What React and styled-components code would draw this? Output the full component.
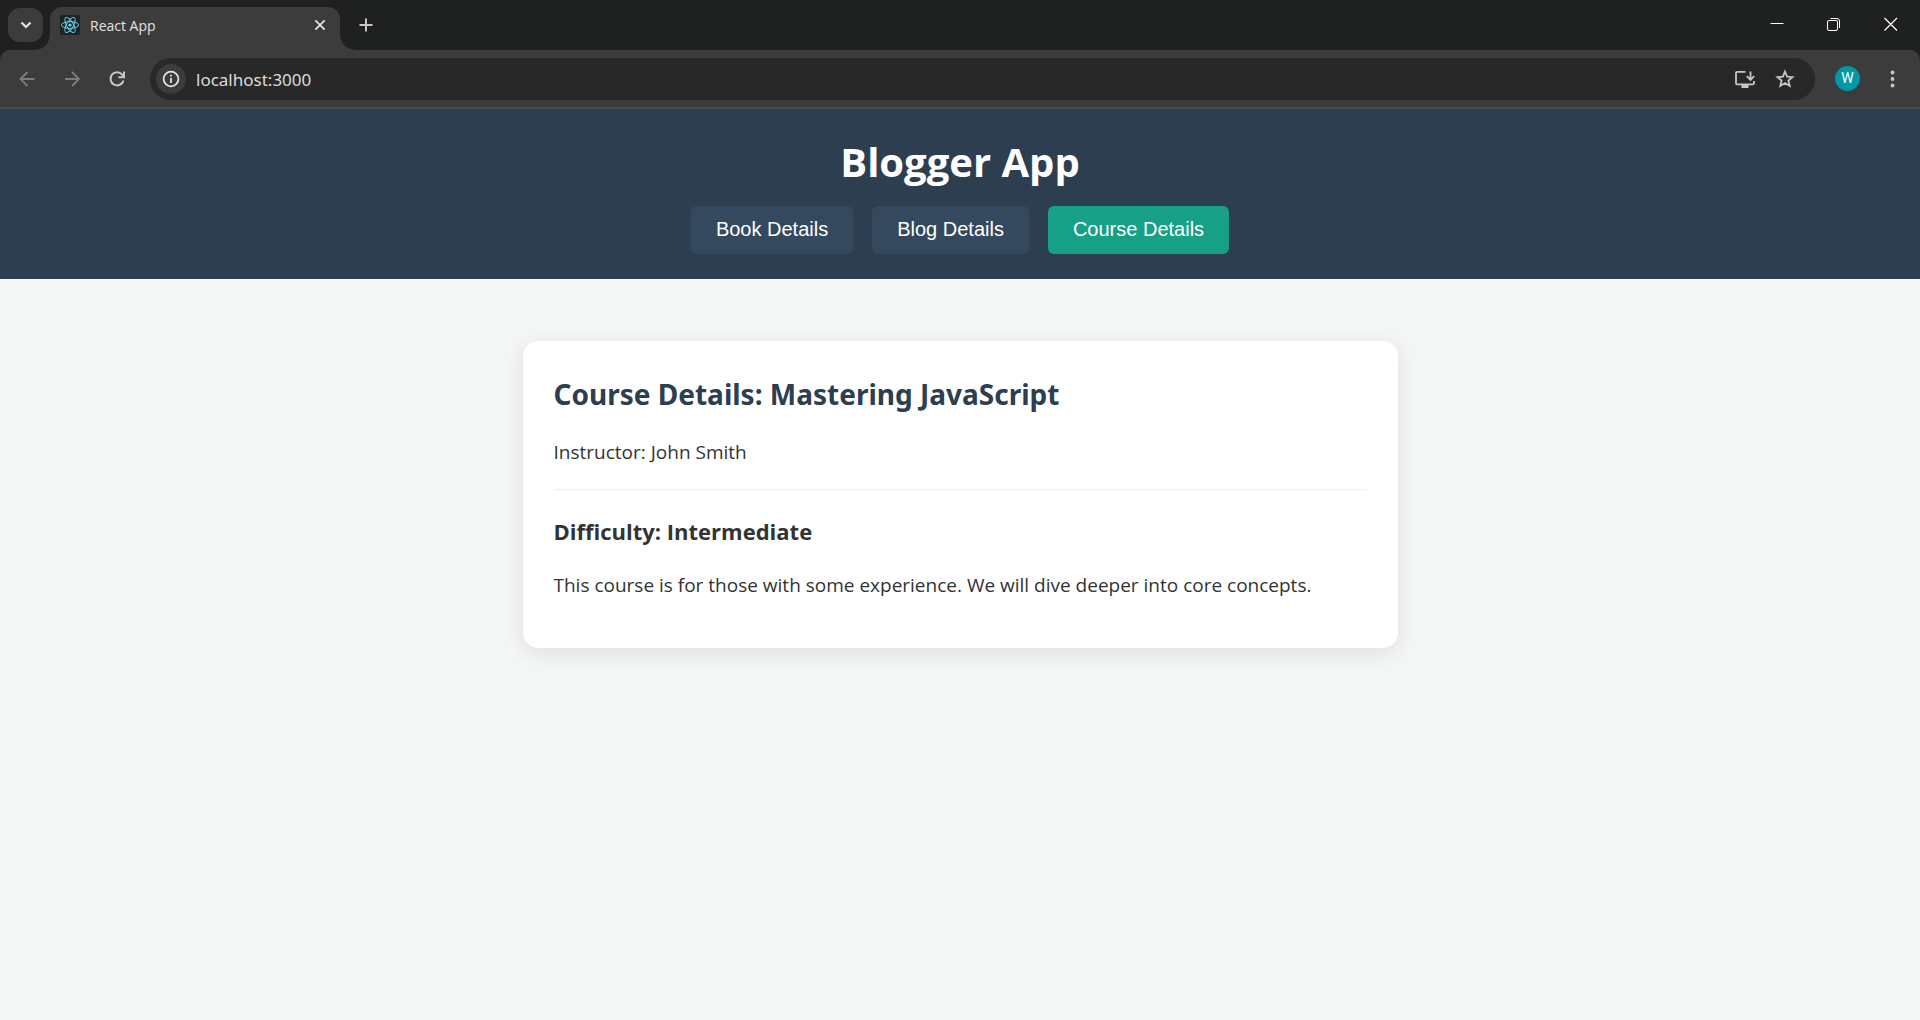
import React from "react";
import styled, { createGlobalStyle } from "styled-components";

const c = {
  frame: "#1f2120",
  toolbar: "#3c3c3c",
  field: "#282828",
  icon: "#c7c7c7",
  navy: "#2c3e50",
};

const GlobalStyle = createGlobalStyle`
  *, *::before, *::after { box-sizing: border-box; }
  body {
    margin: 0;
    background: #f4f7f6;
    color: #333;
    font-family: "Open Sans", "Noto Sans", sans-serif;
  }
  button { border: 0; padding: 0; background: none; font: inherit; cursor: pointer; }
`;

const TabStrip = styled.div`
  display: flex;
  align-items: flex-end;
  height: 50px;
  padding: 0 1px 0 8px;
  background: ${c.frame};
`;

const IconButton = styled.button`
  display: flex;
  align-items: center;
  justify-content: center;
  flex: none;
  width: ${(p) => p.$w}px;
  height: ${(p) => p.$h || p.$w}px;
  border-radius: ${(p) => p.$radius || 0}px;
  background: ${(p) => p.$bg || "transparent"};
  color: ${(p) => p.$color || c.icon};
`;

const TabSearch = styled.div`
  align-self: flex-start;
  padding-top: 8px;
`;

const Tab = styled.div`
  position: relative;
  display: flex;
  align-items: center;
  width: 290px;
  height: 43px;
  margin-left: 7px;
  padding: 0 10px 7px;
  border-radius: 12px 12px 0 0;
  background: ${c.toolbar};
  color: #e3e3e3;
  &::before, &::after {
    content: "";
    position: absolute;
    bottom: 0;
    width: 14px;
    height: 14px;
  }
  &::before {
    right: 100%;
    background: radial-gradient(circle at 0 0, transparent 13px, ${c.toolbar} 14px);
  }
  &::after {
    left: 100%;
    background: radial-gradient(circle at 100% 0, transparent 13px, ${c.toolbar} 14px);
  }
`;

const Favicon = styled.span`
  display: flex;
  width: 20px;
  height: 20px;
  border-radius: 2px;
  background: #222;
`;

const TabTitle = styled.span`
  flex: 1;
  padding: 1px 0 0 10px;
  font-size: 14px;
  line-height: 21px;
`;

const NewTab = styled.div`
  align-self: flex-start;
  padding: 8px 0 0 9px;
`;

const WindowControls = styled.div`
  display: flex;
  align-self: flex-start;
  margin-left: auto;
`;

const ToolbarBack = styled.div`
  background: ${c.frame};
`;

const Toolbar = styled.div`
  display: flex;
  align-items: center;
  height: 59px;
  padding: 0 10px 0 5px;
  border-bottom: 2px solid #484a48;
  border-radius: 10px 10px 0 0;
  background: ${c.toolbar};
`;

const NavIcons = styled.div`
  display: flex;
  gap: 1px;
`;

const AddressBar = styled.div`
  display: flex;
  flex: 1;
  align-items: center;
  height: 42px;
  margin: 0 20px 0 11px;
  padding: 0 10px 0 6px;
  border-radius: 21px;
  background: ${c.field};
`;

const Address = styled.input`
  flex: 1;
  min-width: 0;
  height: 32px;
  margin-left: 10px;
  padding: 2px 0 0;
  border: 0;
  outline: 0;
  background: transparent;
  color: #dcdcdc;
  font-family: "Noto Sans", "Open Sans", sans-serif;
  font-size: 17px;
`;

const Avatar = styled.button`
  width: 25px;
  height: 25px;
  margin-right: 14px;
  border-radius: 50%;
  background: #0097a7;
  color: #fff;
  font-family: Roboto, sans-serif;
  font-size: 14px;
  line-height: 25px;
`;

const Header = styled.header`
  display: flex;
  flex-direction: column;
  align-items: center;
  padding: 26px 25px 25px;
  background: ${c.navy};
`;

const AppTitle = styled.h1`
  margin: 0 0 18px;
  color: #fff;
  font-size: 40px;
  line-height: 53px;
`;

const Nav = styled.nav`
  display: flex;
  gap: 19px;
`;

const NavButton = styled.button`
  padding: 11px 25px 13px;
  border-radius: 6px;
  background: ${(p) => (p.$active ? "#16a085" : "#34495e")};
  color: #fff;
  font-family: "Liberation Sans", Arial, sans-serif;
  font-size: 20px;
  line-height: 24px;
`;

const Card = styled.main`
  max-width: 875px;
  margin: 62px auto;
  padding: 33px 31px 49px;
  border-radius: 15px;
  background: #fff;
  box-shadow: 0 5px 25px rgba(0, 0, 0, 0.1);
`;

const CourseTitle = styled.h2`
  margin: 0 0 25px;
  color: ${c.navy};
  font-family: "Noto Sans", "Open Sans", sans-serif;
  font-size: 28px;
  line-height: 40px;
`;

const Text = styled.p`
  margin: 0;
  font-size: 19px;
  line-height: 27px;
`;

const Divider = styled.hr`
  margin: 23px 0 26px;
  border: 0;
  border-top: 1px solid #eee;
`;

const Level = styled.h3`
  margin: 0 0 25px;
  font-size: 22px;
  line-height: 31px;
`;

const Stroke = ({ size = 20, w = 2, d, children }) => (
  <svg width={size} height={size} viewBox={`0 0 ${size} ${size}`} fill="none" stroke="currentColor" strokeWidth={w} aria-hidden="true">
    {d && <path d={d} />}
    {children}
  </svg>
);

const ReactLogo = () => (
  <svg width="20" height="20" viewBox="0 0 20 20" fill="none" stroke="#61dafb" strokeWidth="0.9" aria-hidden="true">
    <circle cx="10" cy="10" r="1.6" fill="#61dafb" stroke="none" />
    {[0, 60, 120].map((a) => (
      <ellipse key={a} cx="10" cy="10" rx="8.6" ry="3.4" transform={`rotate(${a} 10 10)`} />
    ))}
  </svg>
);

const tabs = ["Book Details", "Blog Details", "Course Details"];

export default function App() {
  const [active, setActive] = React.useState("Course Details");
  const [address, setAddress] = React.useState("localhost:3000");
  return (
    <>
      <GlobalStyle />
      <TabStrip>
        <TabSearch>
          <IconButton $w={35} $h={34} $radius={12} $bg={c.toolbar} $color="#e3e3e3" aria-label="Search tabs">
            <Stroke w={2.2} d="M5.5 7.5 L10 12 L14.5 7.5" />
          </IconButton>
        </TabSearch>
        <Tab>
          <Favicon><ReactLogo /></Favicon>
          <TabTitle>React App</TabTitle>
          <IconButton $w={20} $color="#e3e3e3" aria-label="Close tab">
            <Stroke w={1.8} d="M5.4 5.4 L14.6 14.6 M14.6 5.4 L5.4 14.6" />
          </IconButton>
        </Tab>
        <NewTab>
          <IconButton $w={34} aria-label="New tab">
            <Stroke w={2} d="M10 3.5 V16.5 M3.5 10 H16.5" />
          </IconButton>
        </NewTab>
        <WindowControls>
          <IconButton $w={57} $h={48} $color="#fff" aria-label="Minimize">
            <Stroke w={1} d="M3.5 9.5 H16.5" />
          </IconButton>
          <IconButton $w={57} $h={48} $color="#fff" aria-label="Restore">
            <Stroke w={1}>
              <rect x="3.5" y="6.5" width="10" height="10" rx="1.5" />
              <path d="M6.5 4.5 H13 Q15.5 4.5 15.5 7 V14" />
            </Stroke>
          </IconButton>
          <IconButton $w={57} $h={48} $color="#fff" aria-label="Close">
            <Stroke w={1.2} d="M3.5 4 L16 16.5 M16 4 L3.5 16.5" />
          </IconButton>
        </WindowControls>
      </TabStrip>
      <ToolbarBack>
        <Toolbar>
          <NavIcons>
            <IconButton $w={44} $color="#7c7c7c" aria-label="Back">
              <Stroke w={1.8} d="M17.5 10 H4 M10.5 3 L3.5 10 L10.5 17" />
            </IconButton>
            <IconButton $w={44} $color="#7c7c7c" aria-label="Forward">
              <Stroke w={1.8} d="M3 10 H16.5 M10 3 L17 10 L10 17" />
            </IconButton>
            <IconButton $w={44} aria-label="Reload">
              <Stroke>
                <path d="M16.5 11.4 A6.6 6.6 0 1 1 15.2 5.6 L16.5 7.2" />
                <path d="M17 2.6 V8.2 H11.4" />
              </Stroke>
            </IconButton>
          </NavIcons>
          <AddressBar>
            <IconButton $w={30} $radius={15} $bg={c.toolbar} $color="#e3e3e3" aria-label="Site information">
              <Stroke w={1.8}>
                <circle cx="10" cy="10" r="7.4" />
                <path d="M10 9 V14 M10 5.8 V7.6" />
              </Stroke>
            </IconButton>
            <Address aria-label="Address" value={address} onChange={(e) => setAddress(e.target.value)} />
            <IconButton $w={40} aria-label="Install app">
              <svg width="22" height="22" viewBox="0 0 22 22" fill="none" stroke="currentColor" strokeWidth="1.8" aria-hidden="true">
                <path d="M11.5 3.8 H3.2 Q2 3.8 2 5 V15.2 Q2 16.4 3.2 16.4 H18.8 Q20 16.4 20 15.2 V13" />
                <path d="M16.5 3.4 V11.5 M12.8 8.2 L16.5 11.9 L20.2 8.2" />
                <path d="M7.5 18.5 H14.5" strokeWidth="3" />
              </svg>
            </IconButton>
            <IconButton $w={40} aria-label="Bookmark this page">
              <svg width="24" height="24" viewBox="0 0 24 24" fill="none" stroke="currentColor" strokeWidth="1.8" aria-hidden="true">
                <path d="M12 4.6 L14.1 9.6 L19.5 10.1 L15.4 13.6 L16.7 18.9 L12 16.1 L7.3 18.9 L8.6 13.6 L4.5 10.1 L9.9 9.6 Z" />
              </svg>
            </IconButton>
          </AddressBar>
          <Avatar aria-label="Profile">W</Avatar>
          <IconButton $w={36} aria-label="Menu">
            <svg width="20" height="20" viewBox="0 0 20 20" fill="currentColor" aria-hidden="true">
              <circle cx="10.5" cy="3.5" r="1.9" />
              <circle cx="10.5" cy="10" r="1.9" />
              <circle cx="10.5" cy="16.5" r="1.9" />
            </svg>
          </IconButton>
        </Toolbar>
      </ToolbarBack>
      <Header>
        <AppTitle>Blogger App</AppTitle>
        <Nav>
          {tabs.map((t) => (
            <NavButton key={t} $active={t === active} onClick={() => setActive(t)}>{t}</NavButton>
          ))}
        </Nav>
      </Header>
      <Card>
        <CourseTitle>Course Details: Mastering JavaScript</CourseTitle>
        <Text>Instructor: John Smith</Text>
        <Divider />
        <Level>Difficulty: Intermediate</Level>
        <Text>This course is for those with some experience. We will dive deeper into core concepts.</Text>
      </Card>
    </>
  );
}
